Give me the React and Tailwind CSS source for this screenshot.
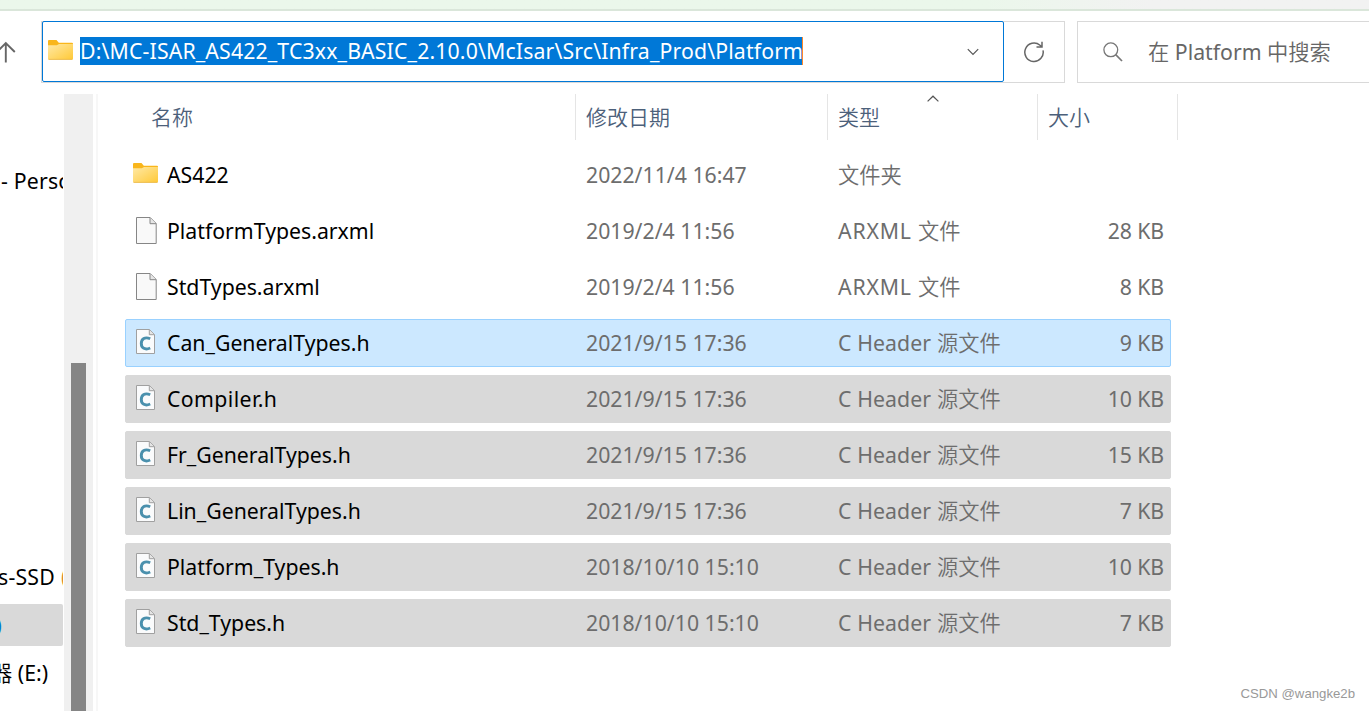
import React from 'react';

const files = [
  { name: 'AS422', date: '2022/11/4 16:47', type: '', typeLabel: '文件夹', size: '', icon: 'folder' },
  { name: 'PlatformTypes.arxml', date: '2019/2/4 11:56', type: 'ARXML', typeLabel: '文件', size: '28 KB', icon: 'blank' },
  { name: 'StdTypes.arxml', date: '2019/2/4 11:56', type: 'ARXML', typeLabel: '文件', size: '8 KB', icon: 'blank' },
  { name: 'Can_GeneralTypes.h', date: '2021/9/15 17:36', type: 'C Header', typeLabel: '源文件', size: '9 KB', icon: 'c', state: 'active' },
  { name: 'Compiler.h', date: '2021/9/15 17:36', type: 'C Header', typeLabel: '源文件', size: '10 KB', icon: 'c', state: 'selected', spacing: 'tracking-[0.4px]' },
  { name: 'Fr_GeneralTypes.h', date: '2021/9/15 17:36', type: 'C Header', typeLabel: '源文件', size: '15 KB', icon: 'c', state: 'selected' },
  { name: 'Lin_GeneralTypes.h', date: '2021/9/15 17:36', type: 'C Header', typeLabel: '源文件', size: '7 KB', icon: 'c', state: 'selected' },
  { name: 'Platform_Types.h', date: '2018/10/10 15:10', type: 'C Header', typeLabel: '源文件', size: '10 KB', icon: 'c', state: 'selected' },
  { name: 'Std_Types.h', date: '2018/10/10 15:10', type: 'C Header', typeLabel: '源文件', size: '7 KB', icon: 'c', state: 'selected' },
];

const rowStyles = {
  active: 'bg-[#cce8ff] border-[#99d1ff]',
  selected: 'bg-[#d9d9d9] border-[#d9d9d9]',
};

function FolderIcon() {
  return (
    <svg width="25" height="20" viewBox="0 0 25 20" className="block shrink-0">
      <defs>
        <linearGradient id="folder" x1="0" y1="0" x2="1" y2="1">
          <stop offset="0" stopColor="#ffe9a6" />
          <stop offset="1" stopColor="#ffc937" />
        </linearGradient>
      </defs>
      <path d="M1 0h7.5l2.3 2.8H24q1 0 1 1V8H0V1q0-1 1-1z" fill="#f9b61b" />
      <path d="M0 5.2h8.8L11 4h14v14.5q0 1-1 1H1q-1 0-1-1z" fill="url(#folder)" />
      <path d="M.5 19.4h24" stroke="#e9b43c" strokeWidth="0.8" />
    </svg>
  );
}

function BlankIcon() {
  return (
    <svg width="21" height="27" viewBox="0 0 21 27" className="block shrink-0">
      <path d="M.5.5h13.7l6 6v20H.5z" fill="#f9f9f9" stroke="#868686" />
      <path d="M14 .8v5.9h6" fill="#e6e6e6" stroke="#868686" />
    </svg>
  );
}

function HeaderFileIcon() {
  return (
    <svg width="19" height="25" viewBox="0 0 19 25" className="block shrink-0">
      <path d="M.5.5h13l5 5v19H.5z" fill="#fafbfc" stroke="#a0a0a0" />
      <path d="M13.3.7v5h5" fill="#e4e4e4" stroke="#a0a0a0" />
      <path d="M14.2 9.8C9 7.4 5.3 10 5.3 14.500S9 21.400 14.200 19" fill="none" stroke="#4a90ad" strokeWidth="2.9" />
    </svg>
  );
}

function FileIcon({ kind }) {
  if (kind === 'folder') return <div className="-mt-[2px] -ml-px"><FolderIcon /></div>;
  if (kind === 'blank') return <div className="pl-px"><BlankIcon /></div>;
  return <div className="-mt-px"><HeaderFileIcon /></div>;
}

function AddressBar() {
  return (
    <div className="flex h-[83px] pt-[10px] shrink-0">
      <div className="w-[41px] flex items-center h-[62px]">
        <svg width="16" height="22" viewBox="0 0 16 22" fill="none" stroke="#666" strokeWidth="1.9">
          <path d="M5.8 21.500V2M-3 11 5.800 2l9 9" />
        </svg>
      </div>
      <div className="flex w-[1024px] h-[62px] border border-[#d9d9d9]">
        <div className="flex items-center w-[962px] h-[61px] -mt-px border border-[#0078d7] rounded-[2px] pl-[5px] pr-[24px]">
          <div className="-mt-[3px]"><FolderIcon /></div>
          <div className="ml-[7px] -mt-px h-7 bg-[#0078d7] border-r border-[#ff8728] text-white leading-7 whitespace-nowrap w-[723px] tracking-[0.145px]">
            D:\MC-ISAR_AS422_TC3xx_BASIC_2.10.0\McIsar\Src\Infra_Prod\Platform
          </div>
          <svg className="ml-auto" width="12" height="8" viewBox="0 0 12 8" fill="none" stroke="#555" strokeWidth="1.2">
            <path d="m.8 1.2 5.2 5.2 5.2-5.2" />
          </svg>
        </div>
        <div className="flex-1 flex items-center justify-center">
          <svg width="22" height="22" viewBox="0 0 22 22" fill="none" stroke="#666" strokeWidth="1.5">
            <path d="M20 9.300A9.200 9.200 0 1 1 17 4.300L19 6M19 .8V6h-5.500" />
          </svg>
        </div>
      </div>
      <div className="ml-3 flex-1 flex items-center h-[62px] border border-r-0 border-[#d9d9d9] pl-[25px] text-[#666]">
        <svg width="20" height="20" viewBox="0 0 20 20" fill="none" stroke="#777" strokeWidth="1.3">
          <circle cx="7.8" cy="7.8" r="6.9" />
          <path d="m12.7 12.7 6.3 6.3" strokeWidth="1.7" />
        </svg>
        <span className="ml-[25px] whitespace-nowrap">
          <span className="font-[350]">在</span> Platform <span className="font-[350]">中搜索</span>
        </span>
      </div>
    </div>
  );
}

function Sidebar() {
  return (
    <div className="flex w-[98px] shrink-0 border-r-2 border-[#f7f7f7]">
      <div className="w-[63px] overflow-hidden whitespace-nowrap text-black">
        <div className="mt-[67px] h-10 leading-10 pl-px tracking-[0.2px]">- Perso</div>
        <div className="mt-[356px] h-10 leading-10 -ml-[2px] flex tracking-[0.2px]">
          s-SSD<span className="ml-[6px] text-[#d98a2b]">(</span>
        </div>
        <div className="mt-[7px] h-[42px] bg-[#d9d9d9] rounded-r-[2px] overflow-hidden">
          <div className="-ml-[4px] text-[19px] leading-[42px] text-[#0078d7]">)</div>
        </div>
        <div className="mt-[7px] h-10 leading-10 -ml-[9px]"><span className="font-[350]">器</span> (E:)</div>
      </div>
      <div className="ml-px w-[29px] bg-[#f0f0f0] pt-[269px] pl-[7px]">
        <div className="w-[15px] h-full bg-[#858585]" />
      </div>
    </div>
  );
}

function ListHeader() {
  return (
    <div className="flex h-[46px] ml-[27px] w-[1053px] leading-[46px] font-[350] text-[21px] text-[#4c607a]">
      <div className="w-[451px] pl-[26px] border-r border-[#e5e5e5]">名称</div>
      <div className="w-[252px] pl-[10px] border-r border-[#e5e5e5]">修改日期</div>
      <div className="w-[210px] pl-[10px] border-r border-[#e5e5e5] relative">
        类型
        <svg className="absolute left-[99px] top-[1px]" width="12" height="7" viewBox="0 0 12 7" fill="none" stroke="#555" strokeWidth="1.2">
          <path d="m.6 6.4 5.400-5.200 5.400 5.200" />
        </svg>
      </div>
      <div className="w-[140px] pl-[10px] border-r border-[#e5e5e5]">大小</div>
    </div>
  );
}

function FileRow({ file }) {
  return (
    <div className={`flex items-center h-12 w-[1046px] border rounded-[2px] text-[#6d6d6d] ${rowStyles[file.state] || 'border-transparent'}`}>
      <div className="w-[39px] mr-[2px] pb-[2px] flex justify-center">
        <FileIcon kind={file.icon} />
      </div>
      <div className={`w-[419px] text-black ${file.spacing || ''}`}>{file.name}</div>
      <div className="w-[252px]">{file.date}</div>
      <div className="w-[210px]">
        {file.type && <span className={file.icon === 'blank' ? 'tracking-[0.8px]' : 'tracking-[0.1px]'}>{file.type} </span>}
        <span className="font-[350]">{file.typeLabel}</span>
      </div>
      <div className="flex-1 pr-[6px] text-right tracking-[-0.1px]">{file.size}</div>
    </div>
  );
}

function App() {
  return (
    <div className="flex flex-col w-[1369px] h-[711px] overflow-hidden bg-white text-[21.25px] font-['Noto_Sans','Noto_Sans_CJK_SC',sans-serif]">
      <div className="h-[11px] shrink-0 border-b-2 border-[#dae6da] bg-linear-to-r from-[#ebf7eb] from-72% to-[#f2f2f2] to-84%" />
      <AddressBar />
      <div className="flex flex-1 min-h-0">
        <Sidebar />
        <div className="flex-1 flex flex-col">
          <ListHeader />
          <div className="flex flex-col gap-2 mt-[11px] ml-[27px]">
            {files.map((file) => (
              <FileRow key={file.name} file={file} />
            ))}
          </div>
          <div className="mt-auto mb-[8px] mr-[14px] text-right text-[13.2px] leading-[18px] text-[#999] font-['Liberation_Sans',sans-serif]">CSDN @wangke2b</div>
        </div>
      </div>
    </div>
  );
}

export default App;
